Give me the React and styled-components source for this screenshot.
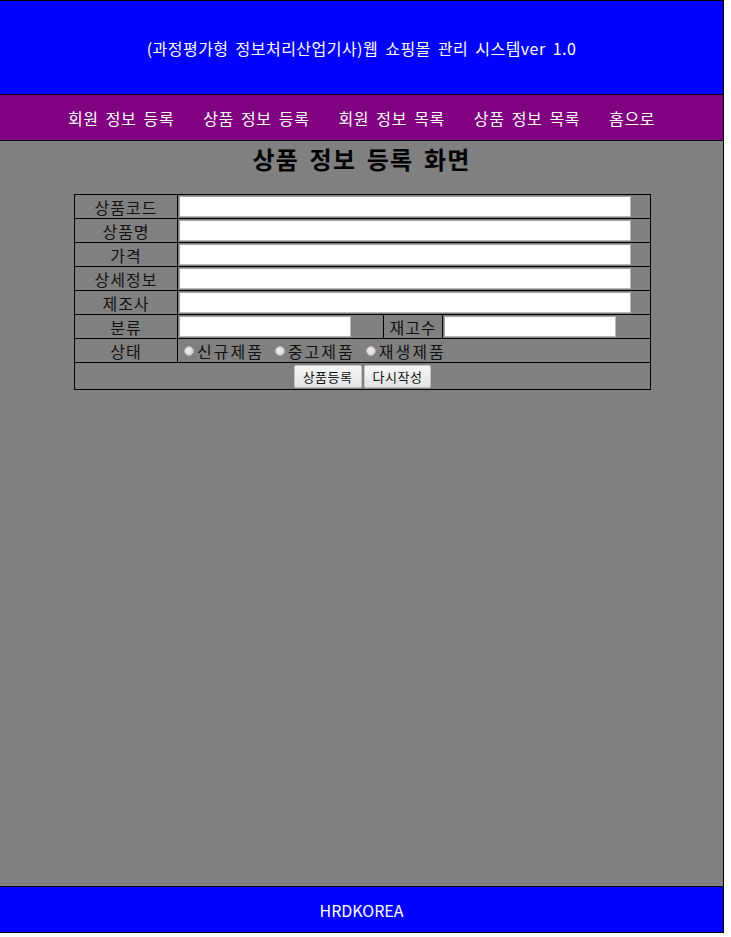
import styled, { createGlobalStyle } from 'styled-components';

const GlobalStyle = createGlobalStyle`
  body {
    margin: 0;
    background: #ffffff;
    font-family: "Noto Sans CJK KR", "Noto Sans", sans-serif;
  }
`;

const menus = ['회원 정보 등록', '상품 정보 등록', '회원 정보 목록', '상품 정보 목록', '홈으로'];

function App() {
  return (
    <>
      <GlobalStyle />
      <Wrap>
        <Header>(과정평가형 정보처리산업기사)웹 쇼핑몰 관리 시스템ver 1.0</Header>
        <Nav>
          {menus.map((m) => (
            <NavItem key={m}>{m}</NavItem>
          ))}
        </Nav>
        <Section>
          <Title>상품 정보 등록 화면</Title>
          <Form>
            <colgroup>
              <col style={{ width: 103 }} />
              <col style={{ width: 206 }} />
              <col style={{ width: 59 }} />
              <col />
            </colgroup>
            <tbody>
              {['상품코드', '상품명', '가격', '상세정보', '제조사'].map((label) => (
                <tr key={label}>
                  <Label>{label}</Label>
                  <Cell colSpan={3}>
                    <Input $w={452} type="text" />
                  </Cell>
                </tr>
              ))}
              <tr>
                <Label>분류</Label>
                <Cell>
                  <Input $w={172} type="text" />
                </Cell>
                <Label>재고수</Label>
                <Cell>
                  <Input $w={172} type="text" />
                </Cell>
              </tr>
              <tr>
                <Label>상태</Label>
                <Cell colSpan={3}>
                  <Radios>
                    {['신규제품', '중고제품', '재생제품'].map((r) => (
                      <RadioLabel key={r}>
                        <Dot />
                        {r}
                      </RadioLabel>
                    ))}
                  </Radios>
                </Cell>
              </tr>
              <tr>
                <ButtonCell colSpan={4}>
                  <Button type="button">상품등록</Button>
                  <Button type="button">다시작성</Button>
                </ButtonCell>
              </tr>
            </tbody>
          </Form>
        </Section>
        <Footer>HRDKOREA</Footer>
      </Wrap>
    </>
  );
}

export default App;

const Wrap = styled.div`
  width: 724px;
  box-sizing: border-box;
  border-right: 1px solid #000;
`;

const Header = styled.header`
  height: 93px;
  border-top: 1px solid #000;
  border-bottom: 1px solid #000;
  background: #0000ff;
  color: #fff;
  font-size: 16px;
  letter-spacing: 0.47px;
  word-spacing: 3px;
  display: flex;
  align-items: center;
  justify-content: center;
`;

const Nav = styled.nav`
  height: 45px;
  border-bottom: 1px solid #000;
  background: #800080;
  display: flex;
  align-items: center;
  justify-content: center;
  gap: 29px;
`;

const NavItem = styled.span`
  color: #fff;
  font-size: 16px;
  letter-spacing: 0.6px;
  word-spacing: 3px;
`;

const Section = styled.section`
  height: 746px;
  border-bottom: 1px solid #000;
  background: #808080;
  padding-top: 1px;
  box-sizing: border-box;
`;

const Title = styled.h2`
  margin: 0 0 19px;
  height: 33px;
  line-height: 33px;
  text-align: center;
  font-size: 24px;
  font-weight: bold;
  letter-spacing: 1.2px;
  word-spacing: 4px;
  color: #000;
`;

const Form = styled.table`
  width: 577px;
  margin: 0 0 0 74px;
  border-collapse: collapse;
  border: 1px solid #000;
  table-layout: fixed;
  font-size: 16px;
  color: #111;

  tr {
    height: 24px;
  }
`;

const Cell = styled.td`
  border: 1px solid #000;
  padding: 0 1px;
  height: 23px;
  vertical-align: middle;
`;

const Label = styled(Cell)`
  text-align: center;
  line-height: 22px;
  letter-spacing: 1px;
`;

const Input = styled.input`
  display: block;
  box-sizing: border-box;
  width: ${(p) => p.$w}px;
  height: 21px;
  margin: 0;
  padding: 0 2px;
  border: 1px solid #b8b8b8;
  border-top-color: #a0a0a0;
  border-left-color: #a0a0a0;
  background: #fff;
`;

const Radios = styled.div`
  display: flex;
  align-items: center;
  padding-left: 5px;
  gap: 11px;
  line-height: 22px;
  letter-spacing: 2px;
`;

const RadioLabel = styled.span`
  display: inline-flex;
  align-items: center;
  gap: 3px;
`;

const Dot = styled.span`
  width: 10px;
  height: 10px;
  border-radius: 50%;
  background: radial-gradient(circle at 40% 40%, #f2f2f2, #d0d0d0);
  border: 1px solid #b0b0b0;
  box-sizing: border-box;
`;

const ButtonCell = styled(Cell)`
  text-align: center;
  height: 26px;
  padding: 0;
  font-size: 0;
`;

const Button = styled.button`
  font-family: "Noto Sans CJK KR", sans-serif;
  font-size: 13px;
  letter-spacing: 0.5px;
  height: 23px;
  padding: 0 8px;
  margin: 0 1px;
  border: 1px solid #c4c4c4;
  border-radius: 2px;
  background: linear-gradient(#f6f6f6, #e4e4e4);
  color: #111;
  vertical-align: middle;
`;

const Footer = styled.footer`
  height: 45px;
  border-bottom: 1px solid #000;
  background: #0000ff;
  color: #fff;
  font-size: 16px;
  display: flex;
  align-items: center;
  justify-content: center;
`;
